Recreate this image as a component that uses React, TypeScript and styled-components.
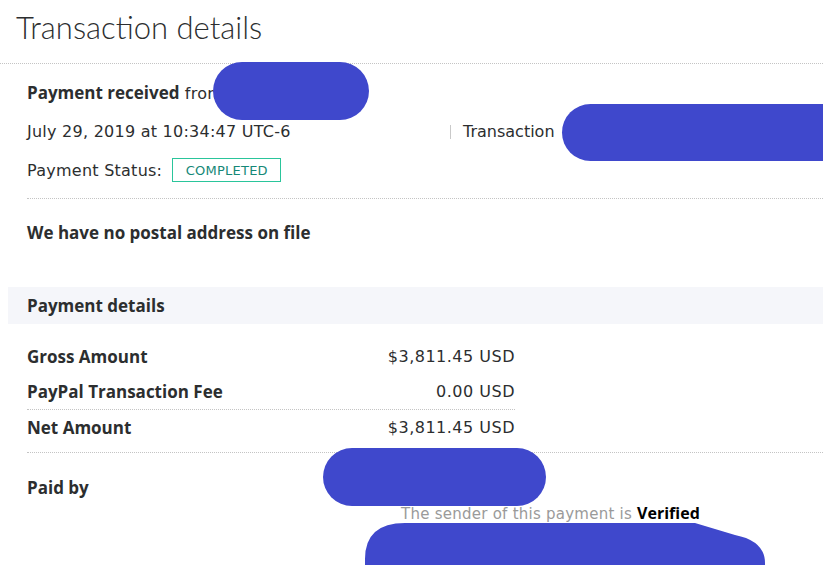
import styled, { createGlobalStyle } from "styled-components";

const GlobalStyle = createGlobalStyle`
  html, body {
    margin: 0;
    padding: 0;
    background: #fff;
  }
  body {
    font-family: "DejaVu Sans", "Liberation Sans", sans-serif;
    letter-spacing: 0.25px;
    color: #2c2e2f;
    overflow: hidden;
  }
`;

const BLOB = "#3f48cc";
const BOLD = `"Open Sans", "Liberation Sans", sans-serif`;

export default function App() {
  return (
    <>
      <GlobalStyle />
      <Page>
        <Title>Transaction details</Title>
        <Divider />
        <Section>
          <Line $top={10}>
            <b>Payment received</b> from
          </Line>
          <MetaRow>
            <span>July 29, 2019 at 10:34:47 UTC-6</span>
            <TxnId>Transaction</TxnId>
          </MetaRow>
          <StatusRow>
            Payment Status:
            <Badge>COMPLETED</Badge>
          </StatusRow>
        </Section>
        <Divider $inset />
        <Section>
          <Heading>We have no postal address on file</Heading>
        </Section>
        <Band>
          <Heading>Payment details</Heading>
        </Band>
        <Amounts>
          <AmountRow>
            <Label>Gross Amount</Label>
            <Value>$3,811.45 USD</Value>
          </AmountRow>
          <AmountRow $ruled>
            <Label>PayPal Transaction Fee</Label>
            <Value>0.00 USD</Value>
          </AmountRow>
          <AmountRow $last>
            <Label>Net Amount</Label>
            <Value>$3,811.45 USD</Value>
          </AmountRow>
        </Amounts>
        <Divider $inset />
        <PaidBy>
          <Label>Paid by</Label>
          <Verified>
            The sender of this payment is <strong>Verified</strong>
          </Verified>
        </PaidBy>

        <Scribble style={{ left: 213, top: 62, width: 156, height: 58 }} />
        <Scribble style={{ left: 562, top: 104, width: 290, height: 57 }} />
        <Scribble style={{ left: 323, top: 448, width: 223, height: 58 }} />
        <SlantScribble viewBox="0 0 400 60" width={400} height={60}>
          <path
            d="M40 0 L330 0 L370 12 Q400 18 400 40 L400 60 L0 60 L0 36 Q0 0 40 0 Z"
            fill={BLOB}
          />
        </SlantScribble>
      </Page>
    </>
  );
}

const Page = styled.div`
  position: relative;
  width: 823px;
  height: 565px;
  overflow: hidden;
`;

const Title = styled.h1`
  margin: 0;
  padding: 8px 0 0 16px;
  height: 63px;
  box-sizing: border-box;
  font-family: "Lato", "Liberation Sans", sans-serif;
  font-weight: 300;
  font-size: 31px;
  line-height: 38px;
  letter-spacing: 0;
  color: #2c2e2f;
`;

const Divider = styled.div<{ $inset?: boolean }>`
  border-top: 1px dotted #c4c4c4;
  margin-left: ${(p) => (p.$inset ? "27px" : "0")};
`;

const Section = styled.div`
  padding: 0 0 0 27px;
  display: flex;
  flex-direction: column;
`;

const Line = styled.div<{ $top?: number }>`
  margin-top: ${(p) => p.$top ?? 0}px;
  font-size: 16px;
  line-height: 38px;
  b {
    font-family: ${BOLD};
    font-size: 17px;
    font-weight: 700;
    letter-spacing: 0;
  }
`;

const MetaRow = styled.div`
  display: flex;
  font-size: 16px;
  line-height: 38px;
  & > span:first-child {
    width: 423px;
  }
`;

const TxnId = styled.span`
  display: flex;
  align-items: center;
  letter-spacing: 0;
  &::before {
    content: "";
    width: 1px;
    height: 14px;
    background: #c9c9c9;
    margin-right: 12px;
  }
`;

const StatusRow = styled.div`
  display: flex;
  align-items: center;
  gap: 10px;
  font-size: 16px;
  height: 38px;
  margin-bottom: 9px;
`;

const Badge = styled.span`
  display: inline-flex;
  align-items: center;
  justify-content: center;
  width: 109px;
  height: 24px;
  box-sizing: border-box;
  border: 1px solid #2ac59b;
  color: #158877;
  font-size: 13px;
`;

const Heading = styled.div`
  font-family: ${BOLD};
  font-size: 17px;
  font-weight: 700;
  line-height: 37px;
  letter-spacing: 0;
  margin: 15px 0 0;
`;

const Band = styled.div`
  margin: 36px 0 0 8px;
  background: #f5f6fa;
  padding-left: 19px;
  height: 37px;
  & > div {
    margin: 0;
  }
`;

const Amounts = styled.div`
  margin: 15px 0 0 27px;
  width: 488px;
`;

const AmountRow = styled.div<{ $ruled?: boolean; $last?: boolean }>`
  display: flex;
  justify-content: space-between;
  align-items: center;
  height: ${(p) => (p.$ruled ? "35px" : "35px")};
  border-bottom: ${(p) => (p.$ruled ? "1px dotted #c4c4c4" : "none")};
  margin-bottom: ${(p) => (p.$last ? "7px" : "0")};
`;

const Label = styled.span`
  font-family: ${BOLD};
  font-size: 17px;
  font-weight: 700;
  letter-spacing: 0;
`;

const Value = styled.span`
  font-size: 16px;
  letter-spacing: 0.5px;
`;

const PaidBy = styled.div`
  padding: 23px 0 0 27px;
  display: flex;
  flex-direction: column;
`;

const Verified = styled.div`
  margin: 3px 0 0 374px;
  font-size: 15px;
  color: #9a9a9a;
  strong {
    font-family: ${BOLD};
    font-size: 16px;
    color: #000;
    font-weight: 700;
    letter-spacing: 0;
  }
`;

const Scribble = styled.div`
  position: absolute;
  background: ${BLOB};
  border-radius: 30px;
`;

const SlantScribble = styled.svg`
  position: absolute;
  left: 365px;
  top: 523px;
`;
